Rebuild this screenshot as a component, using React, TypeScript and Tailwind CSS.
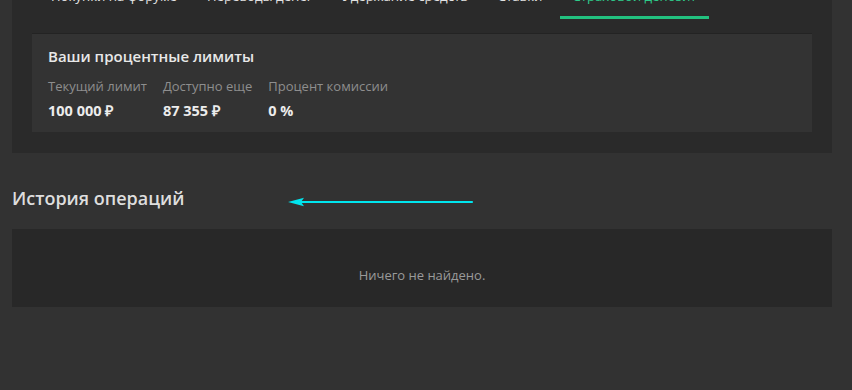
const tabs = [
    { label: "Покупки на форуме", active: false },
    { label: "Переводы денег", active: false },
    { label: "Удержание средств", active: false },
    { label: "Ставки", active: false },
    { label: "Страховой депозит", active: true },
];

const limits = [
    { label: "Текущий лимит", value: "100 000 ₽" },
    { label: "Доступно еще", value: "87 355 ₽" },
    { label: "Процент комиссии", value: "0 %" },
];

function LeftArrow() {
    return (
        <svg width="186" height="10" viewBox="0 0 186 10" className="shrink-0">
            <line x1="10" y1="5" x2="184" y2="5" stroke="#00e5ee" strokeWidth="2.2" strokeLinecap="round" />
            <path d="M0 5 L16 0.8 L13 5 L16 9.2 Z" fill="#00e5ee" />
        </svg>
    );
}

export default function App() {
    return (
        <div className="min-h-screen bg-[#323232] font-['Open_Sans',sans-serif] overflow-hidden">
            <div className="mx-3 mr-5 bg-[#2a2a2a] px-5 pb-[21px]">
                <nav className="-mt-[14px] flex gap-[6px] pl-[7px] pb-[14px] border-b border-[#232323]">
                    {tabs.map((t) => (
                        <div
                            key={t.label}
                            className={
                                t.active
                                    ? "px-3 pb-[10px] border-b-[3px] border-[#22c17f] text-[13.2px] leading-5 text-[#2ecc8a]"
                                    : "px-3 pb-[10px] border-b-[3px] border-transparent text-[13.2px] leading-5 text-[#e2e2e2]"
                            }
                        >
                            {t.label}
                        </div>
                    ))}
                </nav>
                <div className="bg-[#333333] px-4 pt-3 pb-[11px]">
                    <div className="text-[15px] leading-5 font-semibold text-[#e8e8e8]">Ваши процентные лимиты</div>
                    <div className="mt-[10px] flex gap-4">
                        {limits.map((l) => (
                            <div key={l.label} className="flex flex-col gap-[5px]">
                                <div className="text-[13px] leading-5 text-[#8e8e8e]">{l.label}</div>
                                <div className="text-[14.5px] leading-5 font-bold text-[#ececec]">{l.value}</div>
                            </div>
                        ))}
                    </div>
                </div>
            </div>

            <div className="pl-3 pr-5">
                <div className="mt-[33px] flex items-center h-6">
                    <h2 className="text-[18px] leading-6 font-semibold text-[#dedede]">История операций</h2>
                    <div className="ml-[103px] mt-[7px]">
                        <LeftArrow />
                    </div>
                </div>
                <div className="mt-[19px] h-[78px] bg-[#282828] flex items-center justify-center">
                    <span className="text-[13px] text-[#9a9a9a] mt-[16px]">Ничего не найдено.</span>
                </div>
            </div>
        </div>
    );
}
